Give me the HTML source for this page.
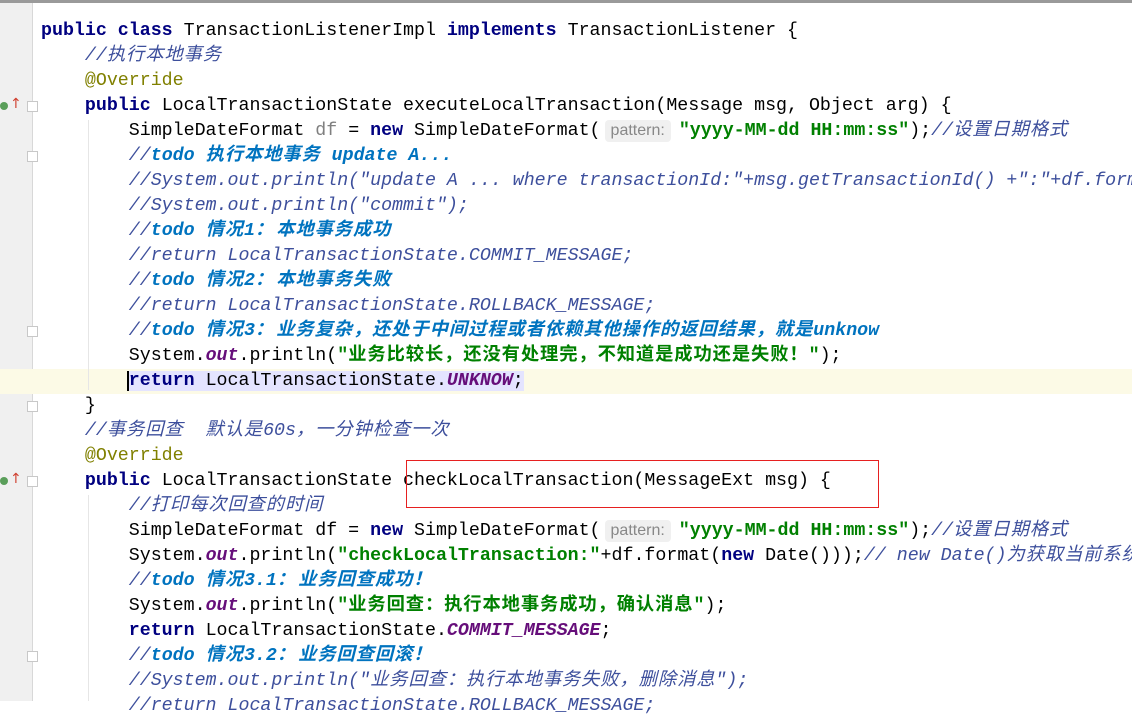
<!DOCTYPE html><html><head><meta charset="utf-8"><style>
body{margin:0;width:1132px;height:701px;overflow:hidden;background:#fff;position:relative;font-family:"Liberation Mono","Noto Sans CJK SC",monospace;font-size:18.3px;color:#000}
#top{position:absolute;left:0;top:0;width:1132px;height:3px;background:#9a9a9a}
#gut{position:absolute;left:0;top:3px;width:32px;height:698px;background:#f0f0f0;border-right:1px solid #d8d8d8}
.hl{position:absolute;left:0;top:369px;width:1132px;height:25px;background:#fcfae6}
.ln{position:absolute;left:41px;height:25px;line-height:25px;white-space:pre}
.k{color:#000080;font-weight:bold}
.c{color:#3d4f9c;font-style:italic}
.t{color:#0073bf;font-weight:bold;font-style:italic}
.s{color:#008000;font-weight:bold}
.a{color:#808000}
.f{color:#660e7a;font-weight:bold;font-style:italic}
.g{color:#808080}
.z{letter-spacing:0.9px}
.q{letter-spacing:3px}
.h{display:inline-block;font-family:"Liberation Sans",sans-serif;font-size:16px;color:#888;background:#f0f0f0;border-radius:4px;padding:0 6px;line-height:22px;margin:0 8px 0 4px}
.fold{position:absolute;left:27px;width:9px;height:9px;border:1px solid #c8c8c8;background:#fff}
.ic{position:absolute;left:0;width:8px;height:8px;border-radius:50%;background:#5a9e5a}
.ar{position:absolute;left:10px;color:#d04030;font-size:14px;font-family:"DejaVu Sans",sans-serif}
#box{position:absolute;left:406px;top:460px;width:471px;height:46px;border:1px solid #e62020}
.guide{position:absolute;width:1px;background:#e6e6e6}
</style></head><body>
<div id="top"></div><div id="gut"></div><div class="hl"></div>
<div class="guide" style="left:88px;top:120px;height:270px"></div>
<div class="guide" style="left:88px;top:495px;height:206px"></div>
<div class="fold" style="top:101px"></div><div class="fold" style="top:151px"></div>
<div class="fold" style="top:326px"></div><div class="fold" style="top:401px"></div>
<div class="fold" style="top:476px"></div><div class="fold" style="top:651px"></div>
<div class="ic" style="top:102px"></div><div class="ar" style="top:96px">↑</div>
<div class="ic" style="top:477px"></div><div class="ar" style="top:471px">↑</div>
<div class="ln" style="top:19px"><span class="k">public class</span> TransactionListenerImpl <span class="k">implements</span> TransactionListener {</div>
<div class="ln" style="top:44px">    <span class="c">//<span class="z">执行本地事务</span></span></div>
<div class="ln" style="top:69px">    <span class="a">@Override</span></div>
<div class="ln" style="top:94px">    <span class="k">public</span> LocalTransactionState executeLocalTransaction(Message msg, Object arg) {</div>
<div class="ln" style="top:119px">        SimpleDateFormat <span class="g">df</span> = <span class="k">new</span> SimpleDateFormat(<span class="h">pattern:</span><span class="s">"yyyy-MM-dd HH:mm:ss"</span>);<span class="c">//<span class="z">设置日期格式</span></span></div>
<div class="ln" style="top:144px">        <span class="c">//</span><span class="t">todo <span class="z">执行本地事务</span> update A...</span></div>
<div class="ln" style="top:169px">        <span class="c">//System.out.println("update A ... where transactionId:"+msg.getTransactionId() +":"+df.format</span></div>
<div class="ln" style="top:194px">        <span class="c">//System.out.println("commit");</span></div>
<div class="ln" style="top:219px">        <span class="c">//</span><span class="t">todo <span class="z">情况</span>1<span class="q">：</span><span class="z">本地事务成功</span></span></div>
<div class="ln" style="top:244px">        <span class="c">//return LocalTransactionState.COMMIT_MESSAGE;</span></div>
<div class="ln" style="top:269px">        <span class="c">//</span><span class="t">todo <span class="z">情况</span>2<span class="q">：</span><span class="z">本地事务失败</span></span></div>
<div class="ln" style="top:294px">        <span class="c">//return LocalTransactionState.ROLLBACK_MESSAGE;</span></div>
<div class="ln" style="top:319px">        <span class="c">//</span><span class="t">todo <span class="z">情况</span>3<span class="q">：</span><span class="z">业务复杂，还处于中间过程或者依赖其他操作的返回结果，就是</span>unknow</span></div>
<div class="ln" style="top:344px">        System.<span class="f">out</span>.println(<span class="s">"<span class="z">业务比较长，还没有处理完，不知道是成功还是失败！</span>"</span>);</div>
<div class="ln" style="top:369px">        <span style="background:#e4e4ff;border-left:2px solid #000;margin-left:-2px"><span class="k">return</span> LocalTransactionState.<span class="f">UNKNOW</span>;</span></div>
<div class="ln" style="top:394px">    }</div>
<div class="ln" style="top:419px">    <span class="c">//<span class="z">事务回查</span>  <span class="z">默认是</span>60s<span class="z">，一分钟检查一次</span></span></div>
<div class="ln" style="top:444px">    <span class="a">@Override</span></div>
<div class="ln" style="top:469px">    <span class="k">public</span> LocalTransactionState checkLocalTransaction(MessageExt msg) {</div>
<div class="ln" style="top:494px">        <span class="c">//<span class="z">打印每次回查的时间</span></span></div>
<div class="ln" style="top:519px">        SimpleDateFormat df = <span class="k">new</span> SimpleDateFormat(<span class="h">pattern:</span><span class="s">"yyyy-MM-dd HH:mm:ss"</span>);<span class="c">//<span class="z">设置日期格式</span></span></div>
<div class="ln" style="top:544px">        System.<span class="f">out</span>.println(<span class="s">"checkLocalTransaction:"</span>+df.format(<span class="k">new</span> Date()));<span class="c">// new Date()<span class="z">为获取当前系统</span></span></div>
<div class="ln" style="top:569px">        <span class="c">//</span><span class="t">todo <span class="z">情况</span>3.1<span class="q">：</span><span class="z">业务回查成功！</span></span></div>
<div class="ln" style="top:594px">        System.<span class="f">out</span>.println(<span class="s">"<span class="z">业务回查：执行本地事务成功，确认消息</span>"</span>);</div>
<div class="ln" style="top:619px">        <span class="k">return</span> LocalTransactionState.<span class="f">COMMIT_MESSAGE</span>;</div>
<div class="ln" style="top:644px">        <span class="c">//</span><span class="t">todo <span class="z">情况</span>3.2<span class="q">：</span><span class="z">业务回查回滚！</span></span></div>
<div class="ln" style="top:669px">        <span class="c">//System.out.println("<span class="z">业务回查：执行本地事务失败，删除消息</span>");</span></div>
<div class="ln" style="top:694px">        <span class="c">//return LocalTransactionState.ROLLBACK_MESSAGE;</span></div>
<div id="box"></div>
</body></html>
